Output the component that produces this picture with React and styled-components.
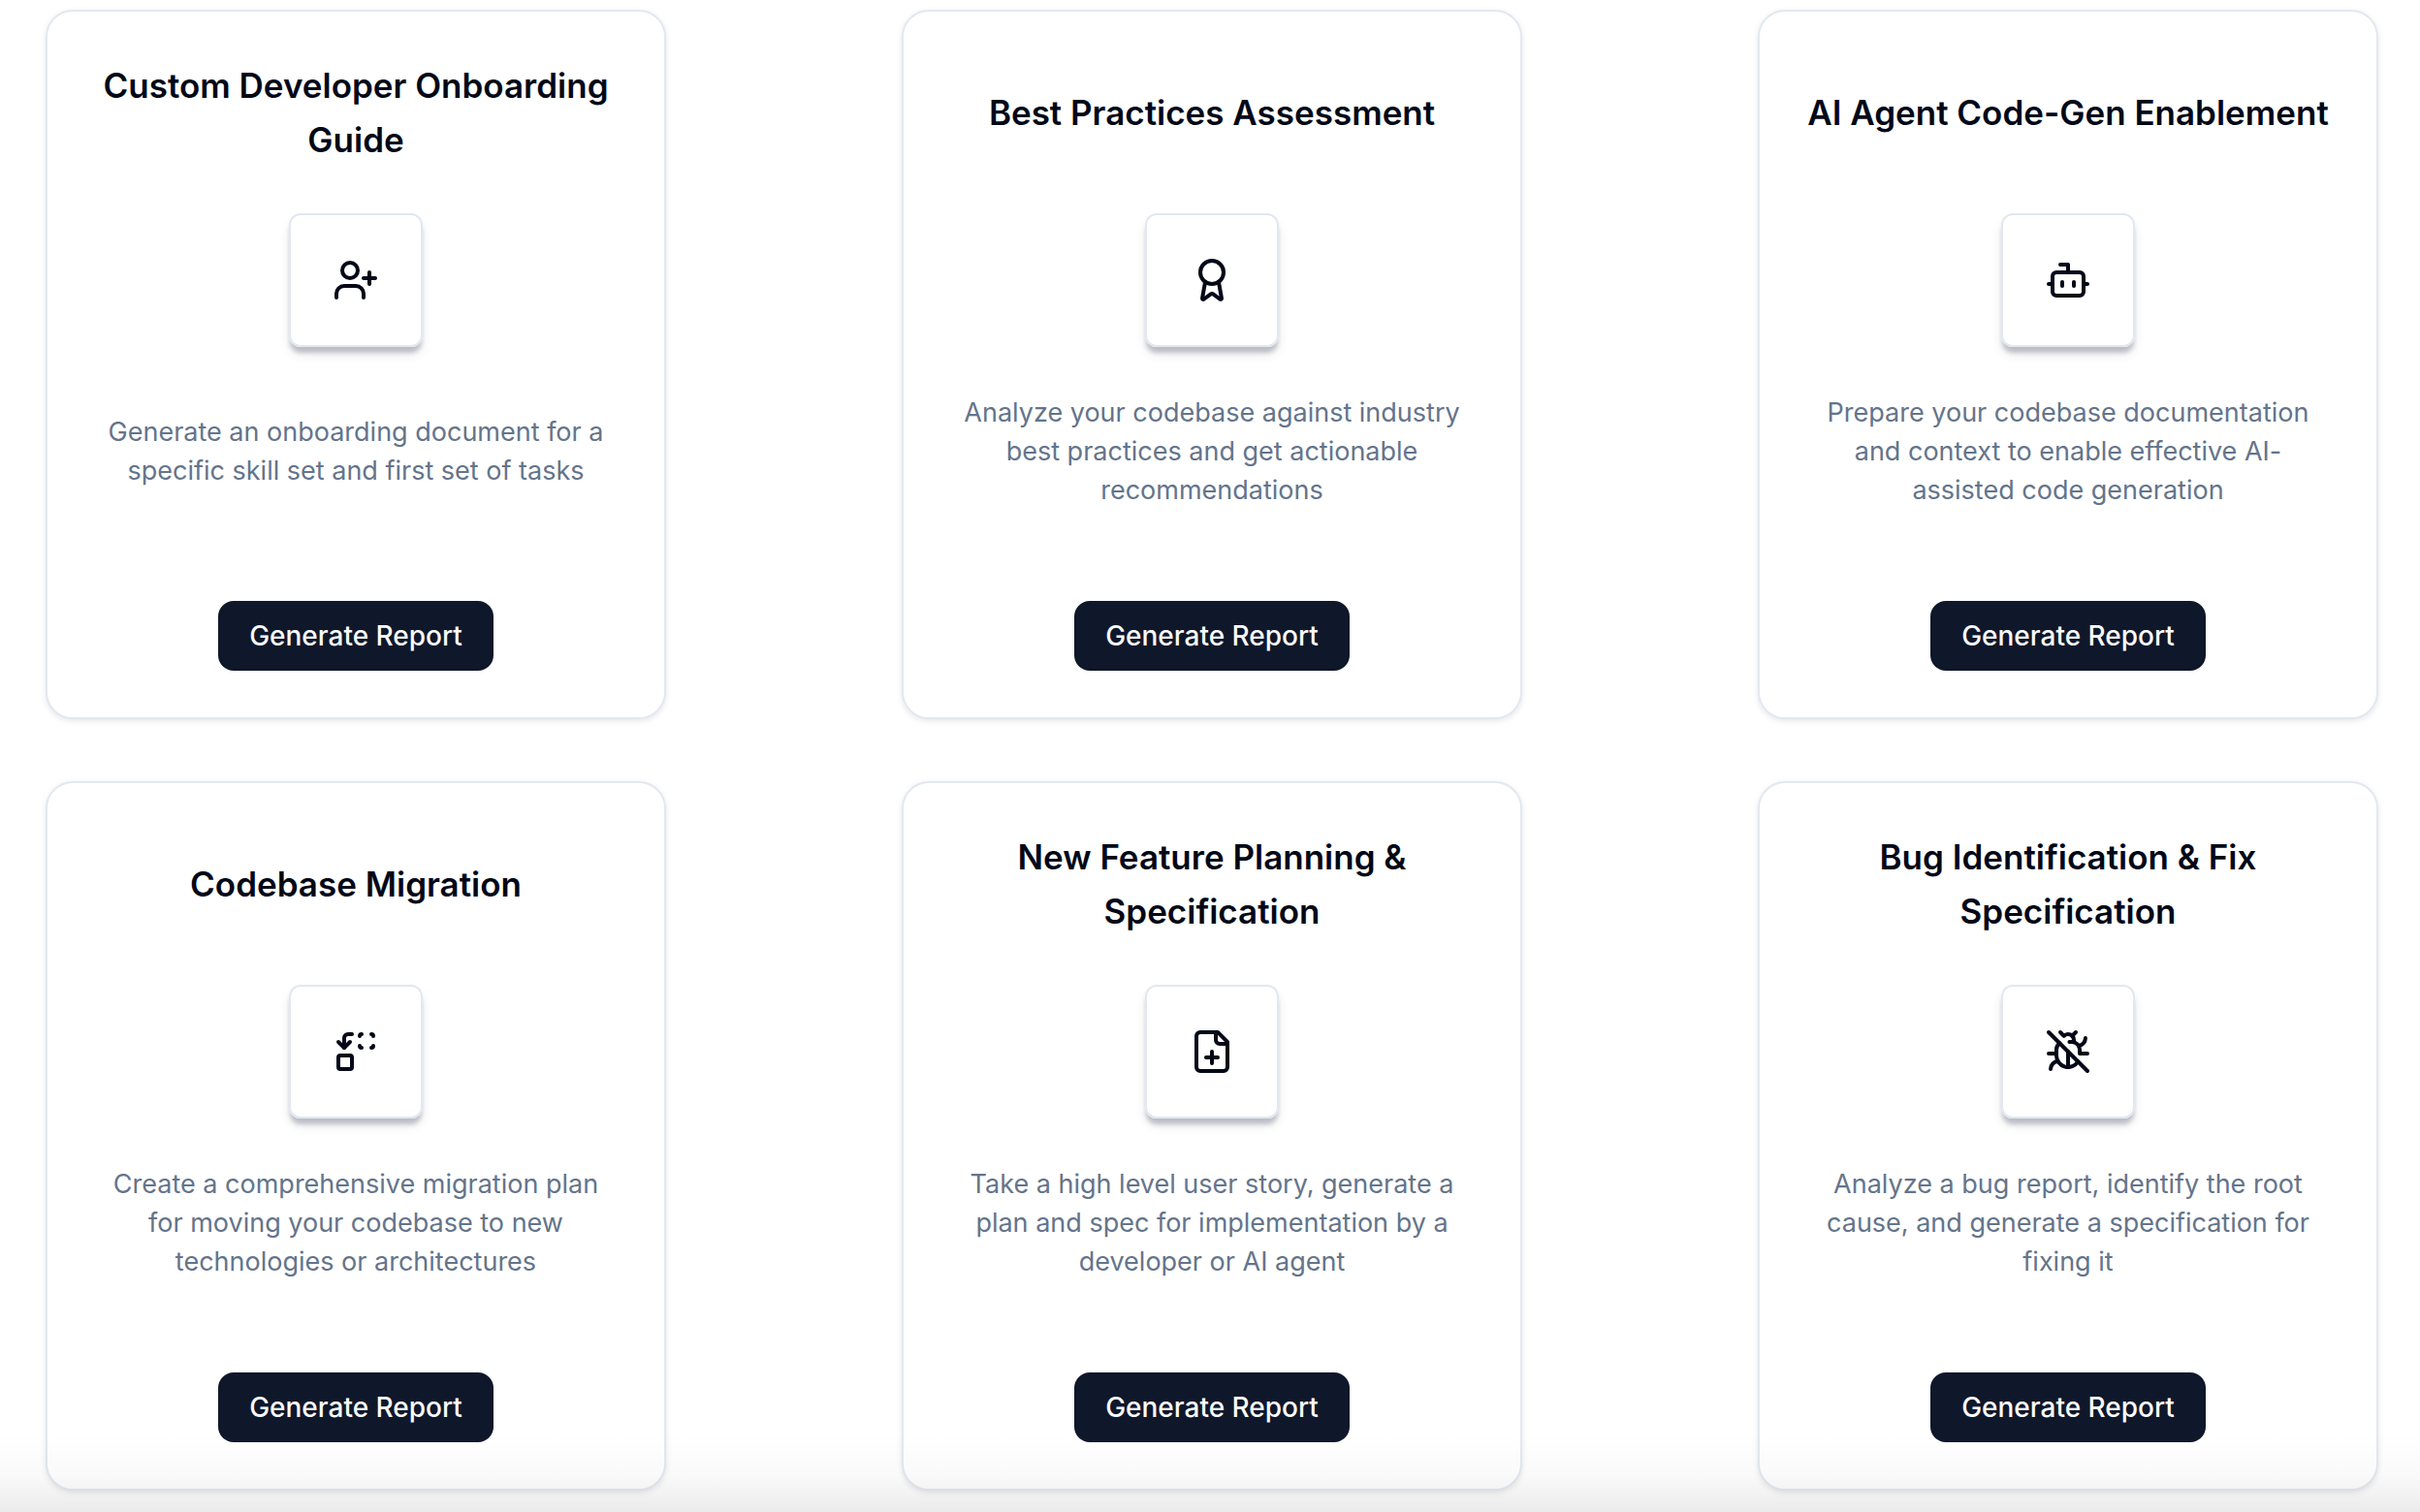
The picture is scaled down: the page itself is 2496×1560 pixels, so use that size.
import React from "react";
import styled, { createGlobalStyle } from "styled-components";
import { Award, Bot, Replace, UserPlus } from "lucide-react";

const GlobalStyle = createGlobalStyle`
  * {
    box-sizing: border-box;
  }

  body {
    margin: 0;
    background: #ffffff;
    color: #020817;
    font-family: Inter, "Liberation Sans", sans-serif;
  }
`;

const Page = styled.main`
  position: relative;
  padding: 10px 43px 22px 47px;
`;

const CardGrid = styled.div`
  display: grid;
  grid-template-columns: repeat(auto-fit, 640px);
  justify-content: space-between;
  row-gap: 64px;
`;

const Card = styled.article`
  display: flex;
  flex-direction: column;
  align-items: center;
  gap: 48px;
  padding: 48px;
  border: 2px solid #e2e8f0;
  border-radius: 28px;
  background: #ffffff;
  box-shadow: 0 2px 6px rgba(0, 0, 0, 0.1);
  text-align: center;
`;

const CardTitle = styled.h3`
  display: flex;
  align-items: center;
  min-height: 112px;
  margin: 0;
  font-size: 35px;
  font-weight: 600;
  line-height: 56px;
`;

const IconTile = styled.div`
  display: flex;
  align-items: center;
  justify-content: center;
  width: 138px;
  height: 138px;
  border: 2px solid #e2e8f0;
  border-radius: 12px;
  box-shadow: 0 8px 12px -1px rgba(0, 0, 0, 0.1),
    0 7px 4px -1px rgba(30, 41, 80, 0.22);

  svg {
    width: 48px;
    height: 48px;
  }
`;

const Description = styled.p`
  display: flex;
  align-items: center;
  min-height: 120px;
  margin: 0;
  color: #64748b;
  font-size: 27px;
  line-height: 40px;
`;

const CardFooter = styled.div`
  padding-top: 46px;
`;

const ReportButton = styled.button`
  height: 72px;
  padding: 0 32px;
  border: none;
  border-radius: 16px;
  background: #0f172a;
  color: #f8fafc;
  font-family: inherit;
  font-size: 28px;
  font-weight: 500;
  line-height: 40px;
  cursor: pointer;
`;

const BottomFade = styled.div`
  position: absolute;
  right: 0;
  bottom: 0;
  left: 0;
  height: 80px;
  background: linear-gradient(
    rgba(0, 0, 0, 0),
    rgba(0, 0, 0, 0.02) 50%,
    rgba(0, 0, 0, 0.08)
  );
  pointer-events: none;
`;

const StrokeIcon = ({ children }) => (
  <svg
    viewBox="0 0 24 24"
    fill="none"
    stroke="currentColor"
    strokeWidth="2"
    strokeLinecap="round"
    strokeLinejoin="round"
    aria-hidden="true"
  >
    {children}
  </svg>
);

const FilePlusIcon = () => (
  <StrokeIcon>
    <path d="M15 2H6a2 2 0 0 0-2 2v16a2 2 0 0 0 2 2h12a2 2 0 0 0 2-2V7Z" />
    <path d="M14 2v4a2 2 0 0 0 2 2h4" />
    <path d="M9 15h6" />
    <path d="M12 18v-6" />
  </StrokeIcon>
);

const BugOffIcon = () => (
  <StrokeIcon>
    <path d="M15 7.13V6a3 3 0 0 0-5.14-2.1L8 2" />
    <path d="M14.12 3.88 16 2" />
    <path d="M22 13h-4v-2a4 4 0 0 0-4-4h-1.3" />
    <path d="M20.97 5c0 2.1-1.6 3.8-3.5 4" />
    <path d="m2 2 20 20" />
    <path d="M7.7 7.7A4 4 0 0 0 6 11v3a6 6 0 0 0 11.13 3.13" />
    <path d="M12 20v-8" />
    <path d="M6 13H2" />
    <path d="M3 21c0-2.1 1.7-3.9 3.8-4" />
  </StrokeIcon>
);

const reports = [
  {
    id: "onboarding",
    title: "Custom Developer Onboarding Guide",
    description:
      "Generate an onboarding document for a specific skill set and first set of tasks",
    icon: UserPlus,
  },
  {
    id: "best-practices",
    title: "Best Practices Assessment",
    description:
      "Analyze your codebase against industry best practices and get actionable recommendations",
    icon: Award,
  },
  {
    id: "ai-agent",
    title: "AI Agent Code-Gen Enablement",
    description:
      "Prepare your codebase documentation and context to enable effective AI-assisted code generation",
    icon: Bot,
  },
  {
    id: "migration",
    title: "Codebase Migration",
    description:
      "Create a comprehensive migration plan for moving your codebase to new technologies or architectures",
    icon: Replace,
  },
  {
    id: "feature",
    title: "New Feature Planning & Specification",
    description:
      "Take a high level user story, generate a plan and spec for implementation by a developer or AI agent",
    icon: FilePlusIcon,
  },
  {
    id: "bug",
    title: "Bug Identification & Fix Specification",
    description:
      "Analyze a bug report, identify the root cause, and generate a specification for fixing it",
    icon: BugOffIcon,
  },
];

const ReportCard = ({ title, description, icon: Icon }) => (
  <Card>
    <CardTitle>{title}</CardTitle>
    <IconTile>
      <Icon />
    </IconTile>
    <Description>{description}</Description>
    <CardFooter>
      <ReportButton type="button">Generate Report</ReportButton>
    </CardFooter>
  </Card>
);

const App = () => (
  <>
    <GlobalStyle />
    <Page>
      <CardGrid>
        {reports.map((report) => (
          <ReportCard
            key={report.id}
            title={report.title}
            description={report.description}
            icon={report.icon}
          />
        ))}
      </CardGrid>
      <BottomFade />
    </Page>
  </>
);

export default App;
